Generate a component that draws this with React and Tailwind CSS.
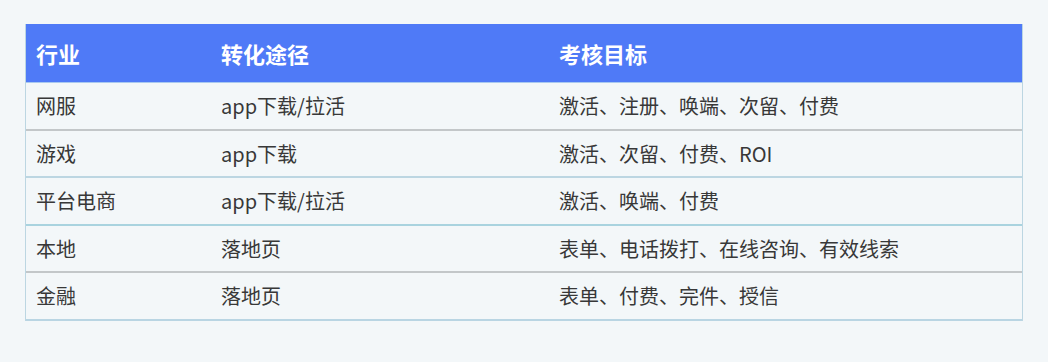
const rows = [
  { industry: "网服", path: "app下载/拉活", goal: "激活、注册、唤端、次留、付费", line: "border-[#c3c7c9]" },
  { industry: "游戏", path: "app下载", goal: "激活、次留、付费、ROI", line: "border-[#bcd6e2]" },
  { industry: "平台电商", path: "app下载/拉活", goal: "激活、唤端、付费", line: "border-[#a9d3df]" },
  { industry: "本地", path: "落地页", goal: "表单、电话拨打、在线咨询、有效线索", line: "border-[#c3c7c9]" },
  { industry: "金融", path: "落地页", goal: "表单、付费、完件、授信", line: "border-[#b9d5e3]" },
];

const cols = "grid grid-cols-[185px_338px_1fr]";

export default function App() {
  return (
    <div
      className="w-[1048px] h-[362px] bg-[#f3f7f9] pt-[24px] pl-[25px]"
      style={{ fontFamily: '"Noto Sans CJK SC", "Noto Sans", sans-serif' }}
    >
      <div className="w-[998px] border-l border-r border-[#bcd6e2]">
        {/* header */}
        <div className={`${cols} h-[59px] items-center bg-[#4f7af7] border-b border-[#a9c9f0] text-[22px] font-bold text-white`}>
          <div className="pl-[10px]">行业</div>
          <div className="pl-[10px]">转化途径</div>
          <div className="pl-[10px]">考核目标</div>
        </div>

        {rows.map((row, i) => (
          <div
            key={row.industry}
            className={`${cols} ${i % 2 === 0 ? "h-[48px]" : "h-[47px]"} items-center border-b-2 ${row.line} text-[20px] text-[#383838]`}
          >
            <div className="pl-[10px]">{row.industry}</div>
            <div className="pl-[10px]">{row.path}</div>
            <div className="pl-[10px]">{row.goal}</div>
          </div>
        ))}
      </div>
    </div>
  );
}
